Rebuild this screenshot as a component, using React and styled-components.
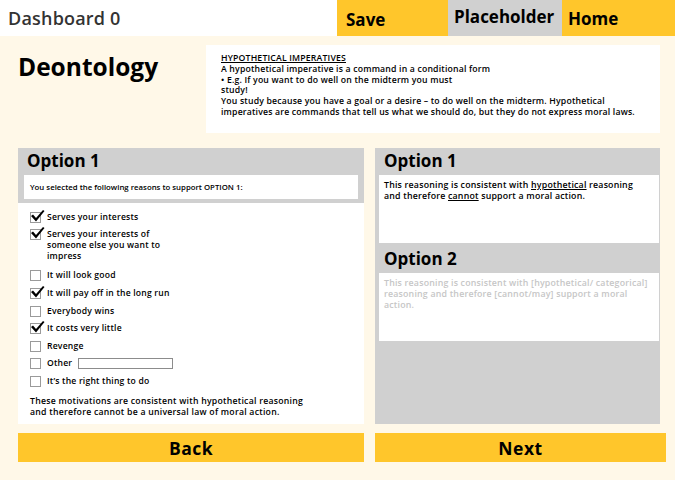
import React from "react";
import styled, { createGlobalStyle } from "styled-components";

const GlobalStyle = createGlobalStyle`
  body {
    margin: 0;
    background: #fff8e8;
    font-family: "Open Sans", "Liberation Sans", sans-serif;
    color: #000;
  }
`;

const Page = styled.div`
  width: 675px;
  height: 480px;
  background: #fff8e8;
  overflow: hidden;
`;

const TopBar = styled.div`
  display: flex;
  height: 36px;
  background: #fff;
`;

const Brand = styled.div`
  flex: 1;
  padding-left: 8px;
  display: flex;
  align-items: center;
  font-size: 18px;
  font-weight: 600;
  letter-spacing: 0.2px;
  color: #333;
`;

const NavItem = styled.div`
  width: ${(p) => p.w}px;
  background: ${(p) => (p.grey ? "#d0d0d0" : "#ffc62b")};
  padding: ${(p) => p.pt}px 0 0 ${(p) => p.pl}px;
  box-sizing: border-box;
  font-size: 17px;
  font-weight: 700;
`;

const Body = styled.div`
  padding: 9px 9px 0 18px;
`;

const IntroRow = styled.div`
  display: flex;
  margin-right: 6px;
`;

const Title = styled.h1`
  margin: 0;
  width: 188px;
  padding-top: 5px;
  font-size: 24.5px;
  font-weight: 700;
`;

const InfoBox = styled.div`
  flex: 1;
  height: 88px;
  box-sizing: border-box;
  background: #fff;
  padding: 8px 10px 8px 15px;
  font-size: 8.7px;
  letter-spacing: 0.18px;
  line-height: 10.8px;
  font-weight: 600;
  white-space: nowrap;
`;

const InfoHead = styled.div`
  text-decoration: underline;
`;

const Columns = styled.div`
  display: grid;
  grid-template-columns: 346px 291px;
  column-gap: 11px;
  margin-top: 15px;
`;

const Panel = styled.div`
  height: 276px;
  background: ${(p) => (p.white ? "#fff" : "#d0d0d0")};
  display: flex;
  flex-direction: column;
  margin-right: ${(p) => p.mr || 0}px;
  box-sizing: border-box;
`;

const PanelTop = styled.div`
  background: #d0d0d0;
  padding: 0 6px 4px;
`;

const OptionTitle = styled.div`
  font-size: 17px;
  font-weight: 700;
  height: 27px;
  line-height: 26px;
  padding-left: ${(p) => p.pl || 3}px;
`;

const Notice = styled.div`
  background: #fff;
  height: 24px;
  padding-left: 6px;
  display: flex;
  align-items: center;
  font-size: 7.8px;
  font-weight: 600;
`;

const List = styled.div`
  padding: 9px 12px 0;
  display: flex;
  flex-direction: column;
`;

const Item = styled.label`
  display: flex;
  align-items: flex-start;
  font-size: 8.6px;
  letter-spacing: 0.2px;
  line-height: 10.8px;
  font-weight: 600;
  margin-top: ${(p) => p.mt}px;
`;

const Box = styled.span`
  position: relative;
  flex: none;
  width: 9px;
  height: 9px;
  border: 1px solid #9a9a9a;
  background: #fff;
  margin: 0 6px 0 0;
  box-sizing: content-box;
`;

const Tick = styled.svg`
  position: absolute;
  left: -1px;
  top: -4px;
  width: 15px;
  height: 13px;
`;

const TextField = styled.span`
  display: inline-block;
  width: 93px;
  height: 9px;
  border: 1px solid #8c8c8c;
  margin-left: 6px;
`;

const Summary = styled.div`
  margin-top: 9px;
  font-size: 8.7px;
  letter-spacing: 0.25px;
  line-height: 10.6px;
  font-weight: 600;
`;

const ResultBox = styled.div`
  background: #fff;
  margin: 0 1px 0 4px;
  height: 68px;
  box-sizing: border-box;
  padding: 5px 2px 5px 5px;
  font-size: 8.8px;
  letter-spacing: 0.2px;
  line-height: 10.8px;
  font-weight: 600;
  white-space: nowrap;
  color: ${(p) => (p.muted ? "#c6c6c6" : "#000")};
`;

const Under = styled.span`
  text-decoration: underline;
`;

const Spacer = styled.div`
  height: ${(p) => p.h}px;
`;

const ActionButton = styled.button`
  margin-top: 9px;
  height: 29px;
  border: none;
  background: #ffc62b;
  font-family: inherit;
  font-size: 17.5px;
  letter-spacing: 0.5px;
  font-weight: 700;
  color: #000;
  cursor: pointer;
`;

const reasons = [
  { label: "Serves your interests", checked: true, mt: 0 },
  {
    label: (
      <>
        Serves your interests of
        <br />
        someone else you want to
        <br />
        impress
      </>
    ),
    checked: true,
    mt: 6,
  },
  { label: "It will look good", checked: false, mt: 9 },
  { label: "It will pay off in the long run", checked: true, mt: 6.6 },
  { label: "Everybody wins", checked: false, mt: 6.6 },
  { label: "It costs very little", checked: true, mt: 6.6 },
  { label: "Revenge", checked: false, mt: 6.6 },
  { label: "Other", checked: false, mt: 6.6, field: true },
  { label: "It’s the right thing to do", checked: false, mt: 6.6 },
];

const Check = ({ checked }) => (
  <Box>
    {checked && (
      <Tick viewBox="0 0 15 13">
        <path d="M1 7 L3 5.5 L6 9 L13 1 L14.5 2 L6 12.5 Z" fill="#000" />
      </Tick>
    )}
  </Box>
);

export default function App() {
  return (
    <Page>
      <GlobalStyle />
      <TopBar>
        <Brand>Dashboard 0</Brand>
        <NavItem w={111} pl={9} pt={8}>Save</NavItem>
        <NavItem w={114} pl={6} pt={5} grey>Placeholder</NavItem>
        <NavItem w={113} pl={6} pt={7}>Home</NavItem>
      </TopBar>
      <Body>
        <IntroRow>
          <Title>Deontology</Title>
          <InfoBox>
            <InfoHead>HYPOTHETICAL IMPERATIVES </InfoHead>
            <div>A hypothetical imperative is a command in a conditional form</div>
            <div>• E.g. If you want to do well on the midterm you must</div>
            <div>study!</div>
            <div>
              You study because you have a goal or a desire – to do well on the midterm. Hypothetical
              <br />
              imperatives are commands that tell us what we should do, but they do not express moral laws.
            </div>
          </InfoBox>
        </IntroRow>
        <Columns>
          <Panel white>
            <PanelTop>
              <OptionTitle>Option 1</OptionTitle>
              <Notice>You selected the following reasons to support OPTION 1:</Notice>
            </PanelTop>
            <List>
              {reasons.map((r, i) => (
                <Item key={i} mt={r.mt}>
                  <Check checked={r.checked} />
                  <span>{r.label}</span>
                  {r.field && <TextField />}
                </Item>
              ))}
              <Summary>
                These motivations are consistent with hypothetical reasoning
                <br />
                and therefore cannot be a universal law of moral action.
              </Summary>
            </List>
          </Panel>
          <Panel mr={6}>
            <OptionTitle pl={9}>Option 1</OptionTitle>
            <ResultBox>
              This reasoning is consistent with <Under>hypothetical</Under> reasoning
              <br />
              and therefore <Under>cannot</Under> support a moral action.
            </ResultBox>
            <Spacer h={3} />
            <OptionTitle pl={9}>Option 2</OptionTitle>
            <ResultBox muted>
              This reasoning is consistent with [hypothetical/ categorical]
              <br />
              reasoning and therefore [cannot/may] support a moral
              <br />
              action.
            </ResultBox>
          </Panel>
          <ActionButton>Back</ActionButton>
          <ActionButton>Next</ActionButton>
        </Columns>
      </Body>
    </Page>
  );
}
